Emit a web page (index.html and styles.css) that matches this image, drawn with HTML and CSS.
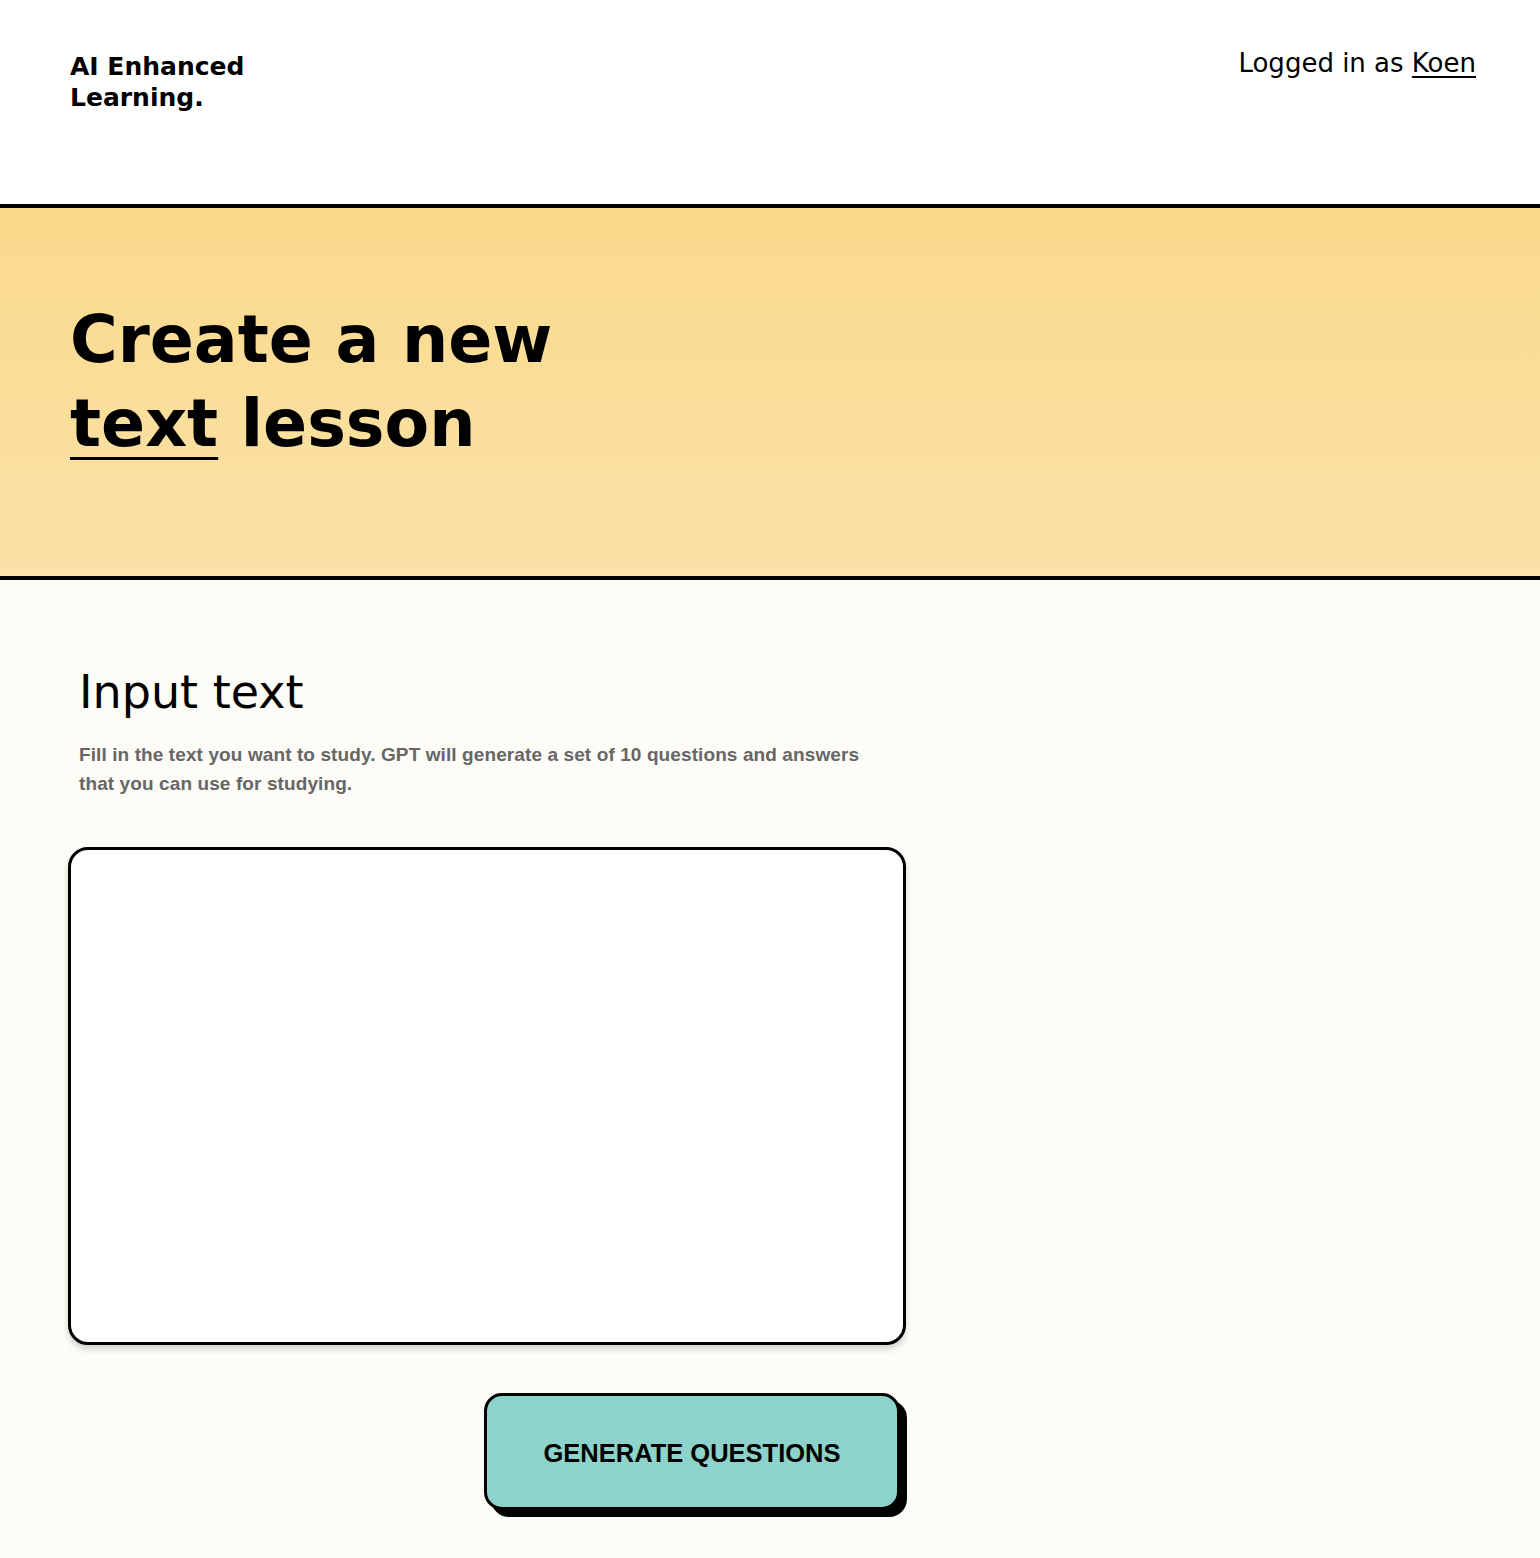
FILE: index.html
```html
<!DOCTYPE html>
<html lang="en">
<head>
<meta charset="utf-8">
<title>AI Enhanced Learning</title>
<link rel="stylesheet" href="styles.css">
</head>
<body>
<header class="topbar">
  <div class="logo">AI Enhanced<br>Learning.</div>
  <div class="user">Logged in as <a href="#" class="user-link">Koen</a></div>
</header>
<section class="hero">
  <h1 class="hero-title">Create a new<br><span class="hero-em">text</span> lesson</h1>
</section>
<main class="content">
  <div class="form">
    <h2 class="form-title">Input text</h2>
    <p class="form-desc">Fill in the text you want to study. GPT will generate a set of 10 questions and answers that you can use for studying.</p>
    <textarea class="form-input"></textarea>
    <div class="form-actions">
      <button class="btn">GENERATE QUESTIONS</button>
    </div>
  </div>
</main>
</body>
</html>
```
FILE: styles.css
```css
html, body {
  margin: 0;
  padding: 0;
}
body {
  background: #fdfcf7;
  font-family: "DejaVu Sans", sans-serif;
  color: #000;
  min-height: 1558px;
}
.topbar {
  background: #fff;
  height: 204px;
  box-sizing: border-box;
  display: flex;
  justify-content: space-between;
  align-items: flex-start;
  padding: 50px 64px 0 70px;
}
.logo {
  font-family: "DejaVu Sans", sans-serif;
  font-weight: 700;
  font-size: 25px;
  line-height: 31px;
  margin-top: 1px;
}
.user {
  font-family: "DejaVu Sans", sans-serif;
  font-weight: 400;
  font-size: 26px;
  line-height: 26px;
}
.user-link {
  color: #000;
  text-decoration: underline;
  text-decoration-thickness: 2px;
  text-underline-offset: 4px;
}
.hero {
  border-top: 4px solid #000;
  border-bottom: 4px solid #000;
  height: 368px;
  background: linear-gradient(180deg, #fad98b 0%, #fae2a8 100%);
  padding: 0 70px;
  display: flex;
  align-items: center;
}
.hero-title {
  margin: -20px 0 0 0;
  font-family: "DejaVu Sans", sans-serif;
  font-weight: 800;
  font-size: 65px;
  line-height: 84px;
}
.hero-em {
  text-decoration: underline;
  text-decoration-thickness: 3px;
  text-underline-offset: 11px;
}
.content {
  padding: 84px 0 40px 68px;
}
.form {
  width: 838px;
  display: flex;
  flex-direction: column;
}
.form-title {
  margin: 0 0 0 11px;
  font-family: "DejaVu Sans", sans-serif;
  font-weight: 500;
  font-size: 46px;
  line-height: 56px;
}
.form-desc {
  margin: 20px 0 0 11px;
  font-family: "Liberation Sans", Arial, sans-serif;
  font-weight: 700;
  font-size: 19px;
  letter-spacing: 0.1px;
  line-height: 29px;
  color: #666;
  max-width: 800px;
}
.form-input {
  margin-top: 49px;
  width: 838px;
  height: 498px;
  box-sizing: border-box;
  border: 3px solid #000;
  border-radius: 20px;
  background: #fff;
  box-shadow: 0 4px 6px rgba(0,0,0,0.18);
  resize: none;
  outline: none;
  font: inherit;
}
.form-actions {
  display: flex;
  justify-content: flex-end;
  margin-top: 48px;
  padding-right: 6px;
}
.btn {
  width: 416px;
  height: 117px;
  box-sizing: border-box;
  border: 3px solid #000;
  border-radius: 18px;
  background: #8dd3cb;
  box-shadow: 7px 7px 0 #000;
  font-family: "Liberation Sans", Arial, sans-serif;
  font-weight: 700;
  font-size: 25.5px;
  color: #000;
  cursor: pointer;
  padding: 4px 0 0 0;
}
```
